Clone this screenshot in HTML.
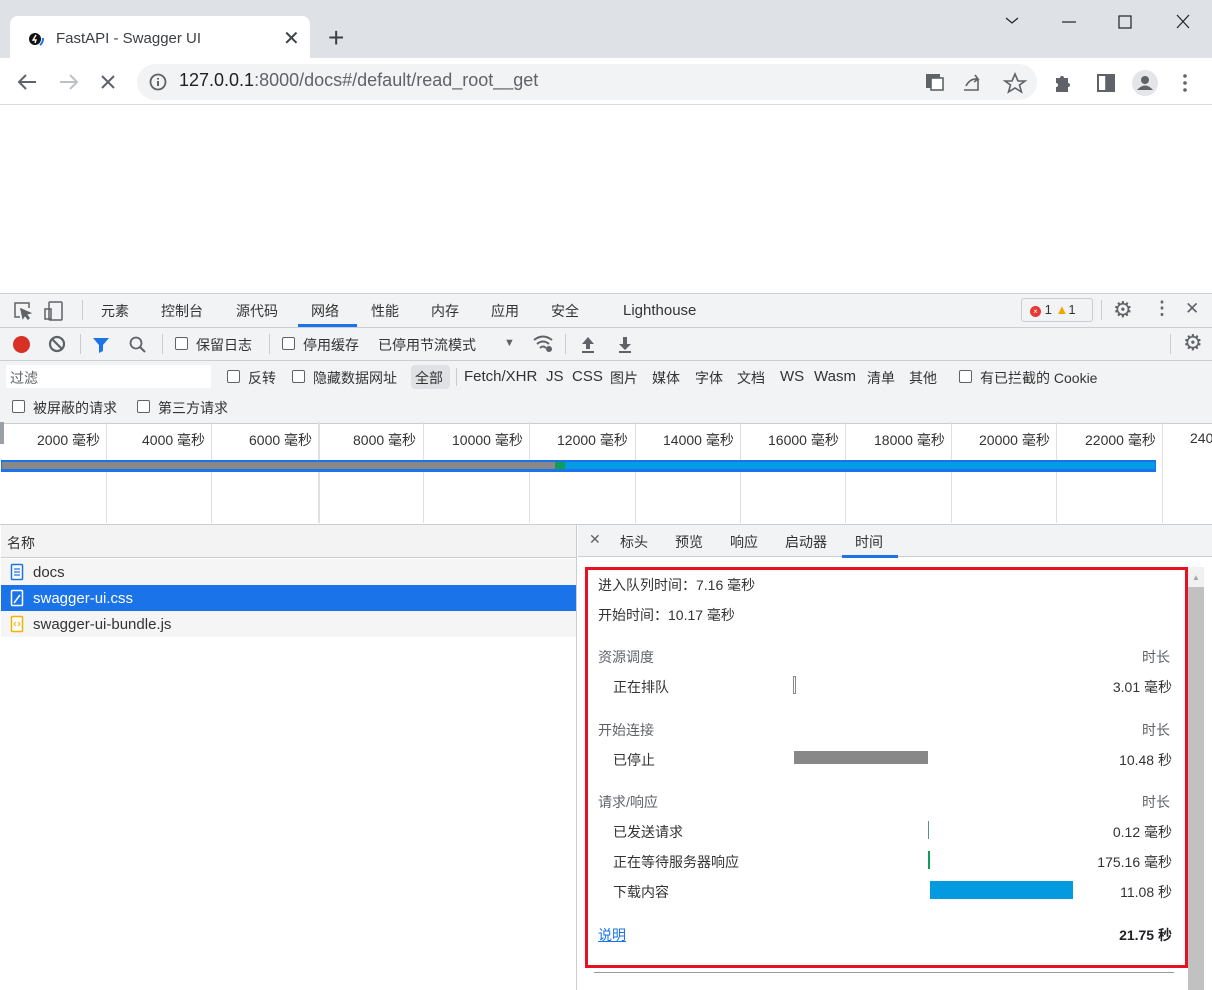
<!DOCTYPE html>
<html><head><meta charset="utf-8"><style>
*{margin:0;padding:0;box-sizing:border-box}
body{width:1212px;height:990px;overflow:hidden;position:relative;background:#fff;font-family:"Liberation Sans","Noto Sans CJK SC",sans-serif;font-size:14px;color:#202124}
.a{position:absolute;white-space:nowrap}
.cb{position:absolute;width:13px;height:13px;border:1px solid #5f6368;border-radius:2px;background:#fff}
.g{position:absolute;top:422px;height:101px;width:1px;background:#e0e0e0}
.t{color:#333}
.f{position:absolute;top:368px;color:#333;white-space:nowrap;line-height:20px}
.l{font-size:15px;top:367px}
</style></head><body>
<div class="a" style="left:0;top:0;width:1212px;height:58px;background:#dee1e6"></div>
<div class="a" style="left:10px;top:16px;width:300px;height:42px;background:#fff;border-radius:8px 8px 0 0"></div>
<svg class="a" style="left:27px;top:31px" width="20" height="16"><circle cx="8" cy="8" r="6" fill="#111"/><path d="M9 4 6 9h3l-1 3" stroke="#fff" stroke-width="1.4" fill="none"/><path d="M16 7q0 5-3 7" stroke="#1a73e8" stroke-width="2" fill="none"/></svg>
<div class="a" style="left:56px;top:30px;font-size:15px;color:#3c4043">FastAPI - Swagger UI</div>
<div class="a" style="left:283px;top:26px;font-size:20px;color:#3c4043">✕</div>
<div class="a" style="left:328px;top:22px;font-size:28px;color:#3c4043;font-weight:300">+</div>
<svg class="a" style="left:1000px;top:10px" width="200" height="24" stroke="#202124" fill="none" stroke-width="1.2"><path d="M6 8l6 5 6-5"/><path d="M62 12h14"/><rect x="119" y="6" width="12" height="12"/><path d="M177 5l12 13M189 5 177 18"/></svg>
<svg class="a" style="left:14px;top:70px" width="110" height="24" fill="none" stroke-width="2"><path d="M22 12H6M12 5 5 12l7 7" stroke="#5f6368"/><path d="M46 12h16M56 5l7 7-7 7" stroke="#bdc1c6"/><path d="M88 6l12 12M100 6 88 18" stroke="#5f6368"/></svg>
<div class="a" style="left:137px;top:64px;width:900px;height:36px;background:#f1f3f4;border-radius:18px"></div>
<svg class="a" style="left:148px;top:72px" width="20" height="20"><circle cx="10" cy="10" r="7.5" stroke="#5f6368" stroke-width="1.8" fill="none"/><path d="M10 9v5M10 6v1.5" stroke="#5f6368" stroke-width="2"/></svg>
<div class="a" style="left:179px;top:70px;font-size:18px;color:#5f6368"><span style="color:#202124">127.0.0.1</span>:8000/docs#/default/read_root__get</div>
<svg class="a" style="left:922px;top:70px" width="280" height="26" fill="none" stroke="#5f6368" stroke-width="1.6"><rect x="4" y="4" width="14" height="14" fill="#5f6368" stroke="none"/><rect x="9" y="8" width="12" height="12" fill="#fff"/><path d="M42 20h14V10M44 16q4-8 12-7l-3-4M56 9l-4 3"/><path d="M93 4l3 7h7l-5.5 4 2 7-6.5-4-6.5 4 2-7-5.5-4h7z"/><path d="M134 8h4a2 2 0 014 0h4v5a2 2 0 010 4v5h-12v-5a2 2 0 000-4z" fill="#5f6368" stroke="none"/><rect x="176" y="5" width="16" height="16" stroke-width="2"/><rect x="184" y="5" width="8" height="16" fill="#5f6368"/><circle cx="223" cy="13" r="13" fill="#e3e5e8" stroke="none"/><circle cx="223" cy="10" r="4" fill="#5f6368" stroke="none"/><path d="M215 20q8-9 16 0z" fill="#5f6368" stroke="none"/><circle cx="263" cy="6" r="1.8" fill="#5f6368" stroke="none"/><circle cx="263" cy="13" r="1.8" fill="#5f6368" stroke="none"/><circle cx="263" cy="20" r="1.8" fill="#5f6368" stroke="none"/></svg>
<div class="a" style="left:0;top:104px;width:1212px;height:1px;background:#dadce0"></div>
<div class="a" style="left:0;top:293px;width:1212px;height:131px;background:#f1f3f4;border-top:1px solid #cacdd1"></div>
<div class="a" style="left:0;top:327px;width:1212px;height:1px;background:#cacdd1"></div>
<div class="a" style="left:0;top:360px;width:1212px;height:1px;background:#cacdd1"></div>
<svg class="a" style="left:12px;top:300px" width="60" height="22" fill="none" stroke="#5f6368" stroke-width="1.5"><path d="M8 17H3V3h14v5"/><path d="M9 9l9 4-4 1 3 4-1 1-3-4-2 3z" fill="#5f6368"/><rect x="37" y="2" width="13" height="18" rx="1"/><rect x="33" y="9" width="6" height="10"/></svg>
<div class="a" style="left:82px;top:300px;width:1px;height:20px;background:#cacdd1"></div>
<div class="a t" style="left:101px;top:301px">元素</div>
<div class="a t" style="left:161px;top:301px">控制台</div>
<div class="a t" style="left:236px;top:301px">源代码</div>
<div class="a t" style="left:311px;top:301px">网络</div>
<div class="a" style="left:298px;top:324px;width:59px;height:3px;background:#1a73e8"></div>
<div class="a t" style="left:371px;top:301px">性能</div>
<div class="a t" style="left:431px;top:301px">内存</div>
<div class="a t" style="left:491px;top:301px">应用</div>
<div class="a t" style="left:551px;top:301px">安全</div>
<div class="a t" style="left:623px;top:302px;font-size:15px">Lighthouse</div>
<div class="a" style="left:1021px;top:298px;width:72px;height:24px;border:1px solid #cacdd1;border-radius:3px;font-size:13px;padding:3px 0 0 8px;color:#333"><span style="display:inline-block;width:11px;height:11px;border-radius:50%;background:#e53935;color:#fff;font-size:8px;text-align:center;line-height:11px">×</span> 1 <span style="color:#f2a600">▲</span>1</div>
<div class="a" style="left:1101px;top:300px;width:1px;height:20px;background:#cacdd1"></div>
<div class="a" style="left:1113px;top:297px;font-size:22px;color:#5f6368">⚙</div>
<div class="a" style="left:1153px;top:298px;font-size:18px;color:#5f6368;font-weight:bold">⋮</div>
<div class="a" style="left:1185px;top:299px;font-size:17px;color:#5f6368">✕</div>
<div class="a" style="left:13px;top:336px;width:17px;height:17px;border-radius:50%;background:#d93025"></div>
<svg class="a" style="left:48px;top:335px" width="20" height="20"><circle cx="9" cy="9" r="7" stroke="#5f6368" stroke-width="2.2" fill="none"/><path d="M4 4l10 10" stroke="#5f6368" stroke-width="2.2"/></svg>
<div class="a" style="left:80px;top:334px;width:1px;height:20px;background:#cacdd1"></div>
<svg class="a" style="left:92px;top:335px" width="60" height="20"><path d="M1 3h16l-6 7v6l-4 2v-8z" fill="#1a73e8"/><circle cx="44" cy="8" r="5.5" stroke="#5f6368" stroke-width="1.8" fill="none"/><path d="M48 12l5 5" stroke="#5f6368" stroke-width="2"/></svg>
<div class="a" style="left:162px;top:334px;width:1px;height:20px;background:#cacdd1"></div>
<div class="cb" style="left:175px;top:337px"></div><div class="a t" style="left:196px;top:335px">保留日志</div>
<div class="a" style="left:269px;top:334px;width:1px;height:20px;background:#cacdd1"></div>
<div class="cb" style="left:282px;top:337px"></div><div class="a t" style="left:303px;top:335px">停用缓存</div>
<div class="a t" style="left:378px;top:335px">已停用节流模式</div>
<div class="a" style="left:504px;top:337px;font-size:11px;color:#5f6368">▼</div>
<svg class="a" style="left:532px;top:334px" width="22" height="20" fill="none" stroke="#5f6368" stroke-width="2"><path d="M2 6q9-7 18 0M5 10q6-5 12 0M8 14q3-3 6 0"/><circle cx="17" cy="15" r="3" fill="#5f6368" stroke="none"/></svg>
<div class="a" style="left:565px;top:334px;width:1px;height:20px;background:#cacdd1"></div>
<svg class="a" style="left:580px;top:335px" width="55" height="20" fill="#5f6368"><path d="M8 2l6 7h-4v5H6V9H2zM2 16h12v2H2z"/><path d="M43 2h4v7h4l-6 6-6-6h4zM39 16h12v2H39z"/></svg>
<div class="a" style="left:1170px;top:334px;width:1px;height:20px;background:#cacdd1"></div>
<div class="a" style="left:1183px;top:330px;font-size:22px;color:#5f6368">⚙</div>
<div class="a" style="left:6px;top:365px;width:205px;height:23px;background:#fff;padding:3px 4px;color:#5f6368">过滤</div>
<div class="cb" style="left:227px;top:370px"></div><div class="a t" style="left:248px;top:368px">反转</div>
<div class="cb" style="left:292px;top:370px"></div><div class="a t" style="left:313px;top:368px">隐藏数据网址</div>
<div class="a" style="left:411px;top:365px;width:39px;height:24px;background:#dfe1e5;border-radius:4px;padding:3px 0 0 4px;color:#333">全部</div>
<div class="a" style="left:456px;top:368px;width:1px;height:18px;background:#cacdd1"></div>
<div class="f l" style="left:464px">Fetch/XHR</div><div class="f l" style="left:546px">JS</div><div class="f l" style="left:572px">CSS</div><div class="f" style="left:610px">图片</div><div class="f" style="left:652px">媒体</div><div class="f" style="left:695px">字体</div><div class="f" style="left:737px">文档</div><div class="f l" style="left:780px">WS</div><div class="f l" style="left:814px">Wasm</div><div class="f" style="left:867px">清单</div><div class="f" style="left:909px">其他</div>
<div class="cb" style="left:959px;top:370px"></div><div class="a t" style="left:980px;top:368px">有已拦截的 Cookie</div>
<div class="cb" style="left:12px;top:400px"></div><div class="a t" style="left:33px;top:398px">被屏蔽的请求</div>
<div class="cb" style="left:137px;top:400px"></div><div class="a t" style="left:158px;top:398px">第三方请求</div>
<div class="a" style="left:0;top:423px;width:1212px;height:101px;background:#fff;border-top:1px solid #cacdd1"></div>
<div class="g" style="left:106px"></div><div class="g" style="left:211px"></div><div class="g" style="left:318px;width:2px"></div><div class="g" style="left:423px"></div><div class="g" style="left:529px"></div><div class="g" style="left:635px"></div><div class="g" style="left:740px"></div><div class="g" style="left:845px"></div><div class="g" style="left:951px"></div><div class="g" style="left:1056px"></div><div class="g" style="left:1162px"></div>
<div class="a" style="left:0;top:422px;width:4px;height:22px;background:#9aa0a6"></div>
<div class="a t" style="top:430px;left:37px">2000 毫秒</div><div class="a t" style="top:430px;left:142px">4000 毫秒</div><div class="a t" style="top:430px;left:249px">6000 毫秒</div><div class="a t" style="top:430px;left:353px">8000 毫秒</div><div class="a t" style="top:430px;left:452px">10000 毫秒</div><div class="a t" style="top:430px;left:557px">12000 毫秒</div><div class="a t" style="top:430px;left:663px">14000 毫秒</div><div class="a t" style="top:430px;left:768px">16000 毫秒</div><div class="a t" style="top:430px;left:874px">18000 毫秒</div><div class="a t" style="top:430px;left:979px">20000 毫秒</div><div class="a t" style="top:430px;left:1085px">22000 毫秒</div><div class="a t" style="top:430px;left:1190px">240</div>
<div class="a" style="left:1px;top:460px;width:1155px;height:12px;background:#1a73e8"></div>
<div class="a" style="left:2px;top:462px;width:553px;height:7px;background:#888"></div>
<div class="a" style="left:555px;top:462px;width:10px;height:7px;background:#0f9d58"></div>
<div class="a" style="left:565px;top:462px;width:590px;height:7px;background:#039be5"></div>
<div class="a" style="left:0;top:524px;width:1212px;height:1px;background:#cacdd1"></div>
<div class="a" style="left:0;top:525px;width:577px;height:465px;background:#fff;border-right:1px solid #cacdd1"></div>
<div class="a" style="left:1px;top:525px;width:575px;height:33px;background:#f3f3f3;border-bottom:1px solid #cacdd1"></div>
<div class="a t" style="left:7px;top:533px">名称</div>
<div class="a" style="left:1px;top:559px;width:575px;height:26px;background:#f5f5f5"></div>
<div class="a" style="left:1px;top:585px;width:575px;height:26px;background:#1a73e8"></div>
<div class="a" style="left:1px;top:611px;width:575px;height:26px;background:#f5f5f5"></div>
<svg class="a" style="left:10px;top:563px" width="16" height="70"><rect x="1.5" y="1.5" width="11" height="15" rx="1" fill="#fff" stroke="#1a73e8" stroke-width="1.5"/><path d="M4 6h6M4 9h6M4 12h6" stroke="#1a73e8" stroke-width="1.2"/><rect x="1.5" y="27.5" width="11" height="15" rx="1" fill="none" stroke="#fff" stroke-width="1.5"/><path d="M4 40l6-8" stroke="#fff" stroke-width="1.5"/><rect x="1.5" y="53.5" width="11" height="15" rx="1" fill="#fff" stroke="#f4b400" stroke-width="1.5"/><path d="M6 59l-2 2 2 2M8 59l2 2-2 2" stroke="#f4b400" fill="none"/></svg>
<div class="a t" style="left:33px;top:564px;font-size:15px">docs</div>
<div class="a" style="left:33px;top:590px;color:#fff;font-size:15px">swagger-ui.css</div>
<div class="a t" style="left:33px;top:616px;font-size:15px">swagger-ui-bundle.js</div>
<div class="a" style="left:578px;top:525px;width:634px;height:32px;background:#f1f3f4;border-bottom:1px solid #cacdd1"></div>
<div class="a" style="left:589px;top:531px;font-size:14px;color:#5f6368">✕</div>
<div class="a t" style="left:620px;top:532px">标头</div><div class="a t" style="left:675px;top:532px">预览</div><div class="a t" style="left:730px;top:532px">响应</div><div class="a t" style="left:785px;top:532px">启动器</div><div class="a t" style="left:855px;top:532px">时间</div>
<div class="a" style="left:842px;top:555px;width:56px;height:3px;background:#1a73e8"></div>
<div class="a" style="left:1188px;top:567px;width:16px;height:423px;background:#f1f1f1"></div>
<div class="a" style="left:1188px;top:587px;width:16px;height:403px;background:#c1c1c1"></div>
<div class="a" style="left:1192px;top:573px;font-size:8px;color:#a3a3a3">▲</div>
<div class="a" style="left:585px;top:567px;width:603px;height:401px;border:3px solid #e81123"></div>
<div class="a t" style="left:598px;top:575px">进入队列时间：7.16 毫秒</div>
<div class="a t" style="left:598px;top:605px">开始时间：10.17 毫秒</div>
<div class="a" style="left:598px;top:647px;color:#5f6368">资源调度</div><div class="a" style="left:1142px;top:647px;color:#5f6368">时长</div>
<div class="a t" style="left:613px;top:677px">正在排队</div><div class="a" style="left:793px;top:676px;width:3px;height:18px;border:1px solid #888"></div><div class="a" style="right:40px;top:677px;color:#333">3.01 毫秒</div>
<div class="a" style="left:598px;top:720px;color:#5f6368">开始连接</div><div class="a" style="left:1142px;top:720px;color:#5f6368">时长</div>
<div class="a t" style="left:613px;top:750px">已停止</div><div class="a" style="left:794px;top:751px;width:134px;height:13px;background:#888"></div><div class="a" style="right:40px;top:750px;color:#333">10.48 秒</div>
<div class="a" style="left:598px;top:792px;color:#5f6368">请求/响应</div><div class="a" style="left:1142px;top:792px;color:#5f6368">时长</div>
<div class="a t" style="left:613px;top:822px">已发送请求</div><div class="a" style="left:928px;top:821px;width:1px;height:18px;background:#5f8b9b"></div><div class="a" style="right:40px;top:822px;color:#333">0.12 毫秒</div>
<div class="a t" style="left:613px;top:852px">正在等待服务器响应</div><div class="a" style="left:928px;top:851px;width:2px;height:18px;background:#0f9d58"></div><div class="a" style="right:40px;top:852px;color:#333">175.16 毫秒</div>
<div class="a t" style="left:613px;top:882px">下载内容</div><div class="a" style="left:930px;top:881px;width:143px;height:18px;background:#039ae0"></div><div class="a" style="right:40px;top:882px;color:#333">11.08 秒</div>
<div class="a" style="left:598px;top:925px;color:#1a73e8;text-decoration:underline">说明</div>
<div class="a" style="right:40px;top:925px;font-weight:bold;color:#202124">21.75 秒</div>
<div class="a" style="left:594px;top:972px;width:580px;height:1px;background:#999"></div>
</body></html>
